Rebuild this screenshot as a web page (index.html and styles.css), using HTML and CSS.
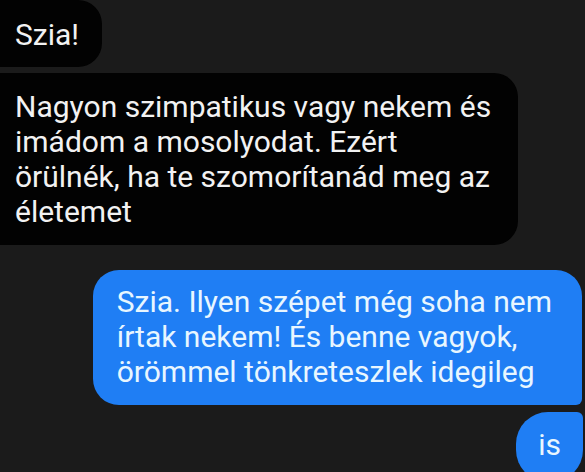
FILE: index.html
```html
<!DOCTYPE html>
<html lang="hu">
  <head>
    <meta charset="UTF-8" />
    <meta name="viewport" content="width=device-width, initial-scale=1.0" />
    <title>Chat</title>
    <link rel="stylesheet" href="styles.css">
  </head>

  <body>
    <div class="chat">
      <div class="msg msg--in msg--first">Szia!</div>
      <div class="msg msg--in">
        Nagyon szimpatikus vagy nekem és<br />
        imádom a mosolyodat. Ezért<br />
        örülnék, ha te szomorítanád meg az<br />
        életemet
      </div>
      <div class="msg msg--out msg--group-top">
        Szia. Ilyen szépet még soha nem<br />
        írtak nekem! És benne vagyok,<br />
        örömmel tönkreteszlek idegileg
      </div>
      <div class="msg msg--out msg--group-end">is</div>
    </div>
  </body>
</html>
```

FILE: styles.css
```css
* {
  margin: 0;
  padding: 0;
  box-sizing: border-box;
}

body {
  width: 585px;
  height: 472px;
  overflow: hidden;
  background: #1b1b1b;
  font-family: "Roboto", "Noto Sans", sans-serif;
}

.chat {
  display: flex;
  flex-direction: column;
  align-items: flex-start;
}

.msg {
  font-size: 30px;
  line-height: 35px;
  padding: 16px 26px 16px 24px;
  white-space: nowrap;
}

/* received messages, cut off on the left edge */
.msg--in {
  background: #020202;
  color: #f2f2f2;
  margin-left: -20px;
  padding-left: 35px;
  padding-right: 27px;
  border-radius: 6px 24px 24px 6px;
  margin-top: 6px;
}

.msg--first {
  margin-top: 0;
  padding: 17px 23px 15px 35px;
}

/* sent messages */
.msg--out {
  align-self: flex-end;
  background: #1f7ef4;
  color: #e8f6ff;
}

.msg--group-top {
  margin-top: 25px;
  margin-right: 3px;
  padding: 14px 30px 16px 24px;
  border-radius: 26px 26px 6px 26px;
}

.msg--group-end {
  margin-top: 7px;
  margin-right: 2px;
  padding: 15px 22px 20px 22px;
  border-radius: 32px 6px 32px 32px;
}
```
